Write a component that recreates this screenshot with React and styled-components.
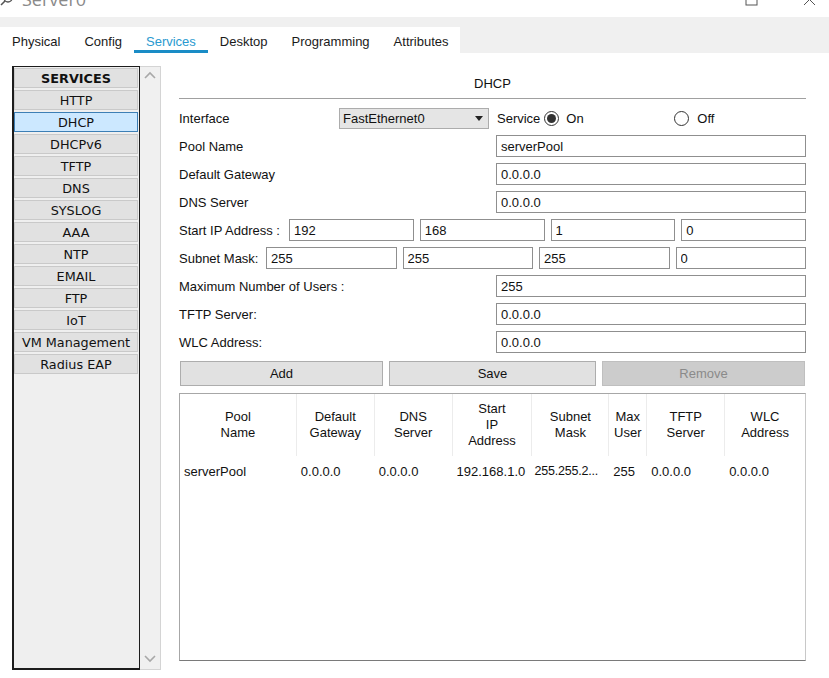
import React from 'react';
import styled, { createGlobalStyle } from 'styled-components';

const GlobalStyle = createGlobalStyle`
  html, body {
    margin: 0;
    padding: 0;
    background: #ffffff;
  }
  * {
    box-sizing: border-box;
  }
`;

const services = [
  'HTTP', 'DHCP', 'DHCPv6', 'TFTP', 'DNS', 'SYSLOG', 'AAA', 'NTP',
  'EMAIL', 'FTP', 'IoT', 'VM Management', 'Radius EAP',
];

const tabs = ['Physical', 'Config', 'Services', 'Desktop', 'Programming', 'Attributes'];

const columns = [
  { title: ['Pool', 'Name'], width: 117, value: 'serverPool' },
  { title: ['Default', 'Gateway'], width: 78, value: '0.0.0.0' },
  { title: ['DNS', 'Server'], width: 78, value: '0.0.0.0' },
  { title: ['Start', 'IP', 'Address'], width: 80, value: '192.168.1.0' },
  { title: ['Subnet', 'Mask'], width: 77, value: '255.255.2...' },
  { title: ['Max', 'User'], width: 38, value: '255' },
  { title: ['TFTP', 'Server'], width: 78, value: '0.0.0.0' },
  { title: ['WLC', 'Address'], width: 80, value: '0.0.0.0' },
];

const App = () => {
  return (
    <>
      <GlobalStyle />
      <Window>
        <TitleBar>
          <TitleLeft>
            <svg width='14' height='14' viewBox='0 0 14 14'>
              <circle cx='8' cy='5' r='4' fill='none' stroke='#555' strokeWidth='1.4' />
              <line x1='5' y1='8' x2='1' y2='12' stroke='#555' strokeWidth='1.6' />
            </svg>
            <TitleText>Server0</TitleText>
          </TitleLeft>
          <Controls>
            <svg width='14' height='14' viewBox='0 0 14 14'>
              <rect x='1' y='-6' width='11' height='11' fill='none' stroke='#555' strokeWidth='1' />
            </svg>
            <svg width='14' height='14' viewBox='0 0 14 14'>
              <line x1='1' y1='-6' x2='12' y2='5' stroke='#555' strokeWidth='1' />
              <line x1='12' y1='-6' x2='1' y2='5' stroke='#555' strokeWidth='1' />
            </svg>
          </Controls>
        </TitleBar>

        <TabStrip>
          <TabRow>
            {tabs.map((t) => (
              <Tab key={t} $active={t === 'Services'}>{t}</Tab>
            ))}
          </TabRow>
        </TabStrip>

        <Body>
          <Sidebar>
            <ListBox>
              <ServiceItem $header>SERVICES</ServiceItem>
              {services.map((s) => (
                <ServiceItem key={s} $selected={s === 'DHCP'}>{s}</ServiceItem>
              ))}
            </ListBox>
            <ScrollBar>
              <svg width='14' height='10' viewBox='0 0 14 10'>
                <polyline points='2,8 7,3 12,8' fill='none' stroke='#a8a8a8' strokeWidth='1.6' />
              </svg>
              <svg width='14' height='10' viewBox='0 0 14 10'>
                <polyline points='2,2 7,7 12,2' fill='none' stroke='#a8a8a8' strokeWidth='1.6' />
              </svg>
            </ScrollBar>
          </Sidebar>

          <Content>
            <Heading>DHCP</Heading>

            <Form>
              <InterfaceRow>
                <Label $width={160}>Interface</Label>
                <Select>
                  <span>FastEthernet0</span>
                  <svg width='8' height='5' viewBox='0 0 8 5'>
                    <polygon points='0,0 8,0 4,5' fill='#222' />
                  </svg>
                </Select>
                <Label $pad={8}>Service</Label>
                <Radio $checked />
                <Label $pad={7} $width={111}>On</Label>
                <Radio />
                <Label $pad={8}>Off</Label>
              </InterfaceRow>

              <Row>
                <Label>Pool Name</Label>
                <Input defaultValue='serverPool' />
              </Row>
              <Row>
                <Label>Default Gateway</Label>
                <Input defaultValue='0.0.0.0' />
              </Row>
              <Row>
                <Label>DNS Server</Label>
                <Input defaultValue='0.0.0.0' />
              </Row>

              <OctetRow $label={104}>
                <Label>Start IP Address :</Label>
                <Input defaultValue='192' />
                <Input defaultValue='168' />
                <Input defaultValue='1' />
                <Input defaultValue='0' />
              </OctetRow>
              <OctetRow $label={81}>
                <Label>Subnet Mask:</Label>
                <Input defaultValue='255' />
                <Input defaultValue='255' />
                <Input defaultValue='255' />
                <Input defaultValue='0' />
              </OctetRow>

              <Row>
                <Label>Maximum Number of Users :</Label>
                <Input defaultValue='255' />
              </Row>
              <Row>
                <Label>TFTP Server:</Label>
                <Input defaultValue='0.0.0.0' />
              </Row>
              <Row>
                <Label>WLC Address:</Label>
                <Input defaultValue='0.0.0.0' />
              </Row>
            </Form>

            <Buttons>
              <Button>Add</Button>
              <Button>Save</Button>
              <Button disabled>Remove</Button>
            </Buttons>

            <Table>
              <HeaderRow>
                {columns.map((c, i) => (
                  <HeaderCell key={i} style={{ width: c.width }}>
                    {c.title.map((line) => (
                      <div key={line}>{line}</div>
                    ))}
                  </HeaderCell>
                ))}
              </HeaderRow>
              <DataRow>
                {columns.map((c, i) => (
                  <DataCell key={i} style={{ width: c.width }}>{c.value}</DataCell>
                ))}
              </DataRow>
            </Table>
          </Content>
        </Body>
      </Window>
    </>
  );
};

// Styled Components
const Window = styled.div`
  width: 829px;
  height: 678px;
  overflow: hidden;
  display: flex;
  flex-direction: column;
  background: #ffffff;
  font-family: 'Liberation Sans', Arial, sans-serif;
  color: #111;
`;

const TitleBar = styled.div`
  height: 17px;
  overflow: hidden;
  display: flex;
  justify-content: space-between;
  align-items: flex-start;
`;

const TitleLeft = styled.div`
  display: flex;
  align-items: flex-start;
  gap: 8px;
  margin-top: -9px;
  svg {
    margin-top: 2px;
  }
`;

const TitleText = styled.span`
  font-family: 'Open Sans', sans-serif;
  font-size: 18px;
  line-height: 16px;
  color: #8a8a8a;
`;

const Controls = styled.div`
  display: flex;
  gap: 44px;
  padding-right: 12px;
`;

const TabStrip = styled.div`
  height: 36px;
  padding-top: 10px;
  background: #f0f0f0;
`;

const TabRow = styled.div`
  width: 460px;
  height: 26px;
  background: #ffffff;
  display: flex;
  align-items: stretch;
`;

const Tab = styled.div`
  padding: 0 12px 1px;
  font-family: 'Liberation Sans', Arial, sans-serif;
  font-size: 13px;
  display: flex;
  align-items: flex-end;
  color: ${(p) => (p.$active ? '#2a9ad0' : '#1a1a1a')};
  border-bottom: 3px solid ${(p) => (p.$active ? '#1a8cc6' : 'transparent')};
`;

const Body = styled.div`
  flex: 1;
  display: flex;
  align-items: flex-start;
`;

const Sidebar = styled.div`
  display: flex;
  margin: 13px 0 0 12px;
  height: 604px;
`;

const ListBox = styled.div`
  width: 128px;
  height: 100%;
  border: 1px solid #1c1c1c;
  border-left-width: 2px;
  border-bottom-width: 2px;
  background: #efefef;
  padding: 1px 0 0 0;
  display: flex;
  flex-direction: column;
  gap: 2px;
`;

const ServiceItem = styled.div`
  height: 20px;
  margin: 0 1px 0 0;
  display: flex;
  align-items: center;
  justify-content: center;
  font-family: 'DejaVu Sans', Verdana, sans-serif;
  font-size: 12.8px;
  font-weight: ${(p) => (p.$header ? 'bold' : 'normal')};
  color: #111;
  background: ${(p) => (p.$selected ? '#cce8ff' : '#e1e1e1')};
  border: 1px solid ${(p) => (p.$selected ? '#3d7fb5' : '#c9c9c9')};
`;

const ScrollBar = styled.div`
  width: 21px;
  height: 100%;
  background: #f0f0f0;
  border: 1px solid #d4d4d4;
  border-left: none;
  display: flex;
  flex-direction: column;
  justify-content: space-between;
  align-items: center;
  padding: 3px 0 5px;
`;

const Content = styled.div`
  width: 627px;
  margin-left: 18px;
  display: flex;
  flex-direction: column;
`;

const Heading = styled.div`
  height: 46px;
  display: flex;
  align-items: flex-end;
  justify-content: center;
  padding-bottom: 6px;
  border-bottom: 1px solid #a0a0a0;
  font-size: 13px;
  line-height: 16px;
`;

const Form = styled.div`
  margin-top: 8px;
  display: flex;
  flex-direction: column;
  gap: 6px;
`;

const Row = styled.div`
  display: grid;
  grid-template-columns: 317px 1fr;
  height: 22px;
  align-items: center;
`;

const InterfaceRow = styled.div`
  display: flex;
  height: 22px;
  align-items: center;
`;

const OctetRow = styled.div`
  display: grid;
  grid-template-columns: ${(p) => p.$label}px repeat(4, 1fr);
  column-gap: 6px;
  height: 22px;
  align-items: center;
`;

const Label = styled.span`
  font-size: 13px;
  white-space: nowrap;
  padding-left: ${(p) => p.$pad || 0}px;
  width: ${(p) => (p.$width ? `${p.$width}px` : 'auto')};
  color: #111;
`;

const Input = styled.input`
  height: 22px;
  width: 100%;
  min-width: 0;
  border: 1px solid #8f8f8f;
  background: #fff;
  padding: 0 4px;
  font-family: 'Liberation Sans', Arial, sans-serif;
  font-size: 13px;
  color: #111;
  outline: none;
`;

const Select = styled.div`
  width: 150px;
  height: 21px;
  display: flex;
  align-items: center;
  justify-content: space-between;
  padding: 0 5px 0 3px;
  background: #e5e5e5;
  border: 1px solid #acacac;
  font-size: 13px;
`;

const Radio = styled.span`
  width: 15px;
  height: 15px;
  margin-left: 4px;
  border-radius: 50%;
  border: 1px solid #333;
  background: #fff;
  display: flex;
  align-items: center;
  justify-content: center;
  &::after {
    content: '';
    width: 9px;
    height: 9px;
    border-radius: 50%;
    background: ${(p) => (p.$checked ? '#333' : 'transparent')};
  }
`;

const Buttons = styled.div`
  margin-top: 8px;
  padding: 0 1px;
  display: grid;
  grid-template-columns: 203px 207px 203px;
  justify-content: space-between;
`;

const Button = styled.button`
  height: 25px;
  font-family: 'Liberation Sans', Arial, sans-serif;
  font-size: 13px;
  color: #111;
  background: #e1e1e1;
  border: 1px solid #adadad;
  &:disabled {
    background: #cccccc;
    border-color: #bfbfbf;
    color: #8a8a8a;
  }
`;

const Table = styled.div`
  margin-top: 7px;
  height: 268px;
  border: 1px solid #a7a7a7;
  border-bottom-color: #7a7a7a;
  border-right-color: #c8c8c8;
`;

const HeaderRow = styled.div`
  display: flex;
  height: 62px;
`;

const HeaderCell = styled.div`
  display: flex;
  flex-direction: column;
  justify-content: center;
  align-items: center;
  font-size: 13px;
  line-height: 16px;
  text-align: center;
  border-right: 1px solid #ececec;
  &:last-child {
    border-right: none;
  }
`;

const DataRow = styled.div`
  display: flex;
  height: 30px;
  align-items: center;
`;

const DataCell = styled.div`
  padding: 0 2px 0 4px;
  font-size: 13px;
  white-space: nowrap;
  overflow: hidden;
  &:nth-child(5) {
    padding-left: 2px;
    font-size: 12.5px;
    letter-spacing: -0.2px;
  }
`;

export default App;
